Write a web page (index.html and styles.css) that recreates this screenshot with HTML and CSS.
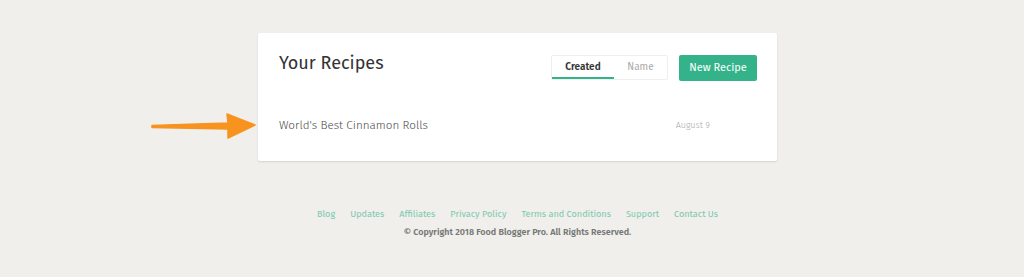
FILE: index.html
```html
<!DOCTYPE html>
<html lang="en">
<head>
  <meta charset="UTF-8">
  <title>Your Recipes</title>
  <meta name="viewport" content="width=device-width, initial-scale=1.0" />
  <link rel="stylesheet" href="styles.css">
</head>
<body>
  <div class="page">
    <div class="card">
      <div class="card-head">
        <h1>Your Recipes</h1>
        <div class="actions">
          <div class="sort">
            <span class="tab active">Created</span>
            <span class="tab">Name</span>
          </div>
          <a class="btn" href="#">New Recipe</a>
        </div>
      </div>
      <div class="recipe">
        <span class="recipe-title">World's Best Cinnamon Rolls</span>
        <span class="recipe-date">August 9</span>
      </div>

      <!-- fleche d'annotation -->
      <svg class="arrow" width="106" height="30" viewBox="0 0 106 30">
        <path d="M1 14.5 L77 12 L76 3 L104 14 L77 27 L77 18 L1 16.5 Z" fill="#f7931e" stroke="#f7931e" stroke-width="1.5" stroke-linejoin="round"/>
      </svg>
    </div>

    <footer class="footer">
      <nav class="links">
        <a href="#">Blog</a>
        <a href="#">Updates</a>
        <a href="#">Affiliates</a>
        <a href="#">Privacy Policy</a>
        <a href="#">Terms and Conditions</a>
        <a href="#">Support</a>
        <a href="#">Contact Us</a>
      </nav>
      <p class="copy">© Copyright 2018 Food Blogger Pro. All Rights Reserved.</p>
    </footer>
  </div>
</body>
</html>
```

FILE: styles.css
```css
body {
  margin: 0;
  background: #f0efeb;
  font-family: "Fira Sans", Lato, "Noto Sans", sans-serif;
  color: #444;
}

.page {
  width: 519px;
  margin-left: calc(50% - 254px);
  padding-top: 33px;
}

.card {
  position: relative;
  background: #fff;
  border-radius: 2px;
  box-shadow: 0 1px 2px rgba(0, 0, 0, 0.12);
  padding: 20px 20px 0 21px;
  height: 128px;
  box-sizing: border-box;
}

.card-head {
  display: flex;
  justify-content: space-between;
  align-items: flex-start;
}

h1 {
  margin: 0;
  font-size: 18px;
  font-weight: 400;
  color: #333;
  line-height: 20px;
}

.actions {
  display: flex;
  gap: 11px;
  margin-top: 2px;
}

.sort {
  display: flex;
  border: 1px solid #eee;
  border-radius: 2px;
  height: 25px;
  box-sizing: border-box;
}

.tab {
  font-size: 10px;
  line-height: 23px;
  color: #aaa;
  width: 53px;
  text-align: center;
  box-sizing: border-box;
}

.tab.active {
  width: 62px;
  color: #333;
  font-weight: 600;
  border-bottom: 2px solid #34b38a;
}

.btn {
  display: block;
  background: #34b38a;
  color: #fff;
  text-decoration: none;
  font-size: 11px;
  line-height: 26px;
  height: 26px;
  width: 78px;
  text-align: center;
  border-radius: 2px;
}

.recipe {
  display: flex;
  align-items: center;
  margin-top: 37px;
  padding-right: 47px;
  justify-content: space-between;
}

.recipe-title {
  font-size: 11.7px;
  font-weight: 300;
  color: #4a4a4a;
}

.recipe-date {
  font-size: 9px;
  font-weight: 300;
  color: #aaa;
}

.arrow {
  position: absolute;
  left: -107px;
  top: 78px;
}

.footer {
  text-align: center;
  margin-top: 47px;
}

.links {
  display: flex;
  justify-content: center;
  gap: 15px;
}

.links a {
  color: #7cc9ad;
  font-size: 9.1px;
  font-weight: 400;
  text-decoration: none;
}

.copy {
  margin: 8px 0 0;
  font-size: 9px;
  font-weight: 600;
  color: #777;
}
```
